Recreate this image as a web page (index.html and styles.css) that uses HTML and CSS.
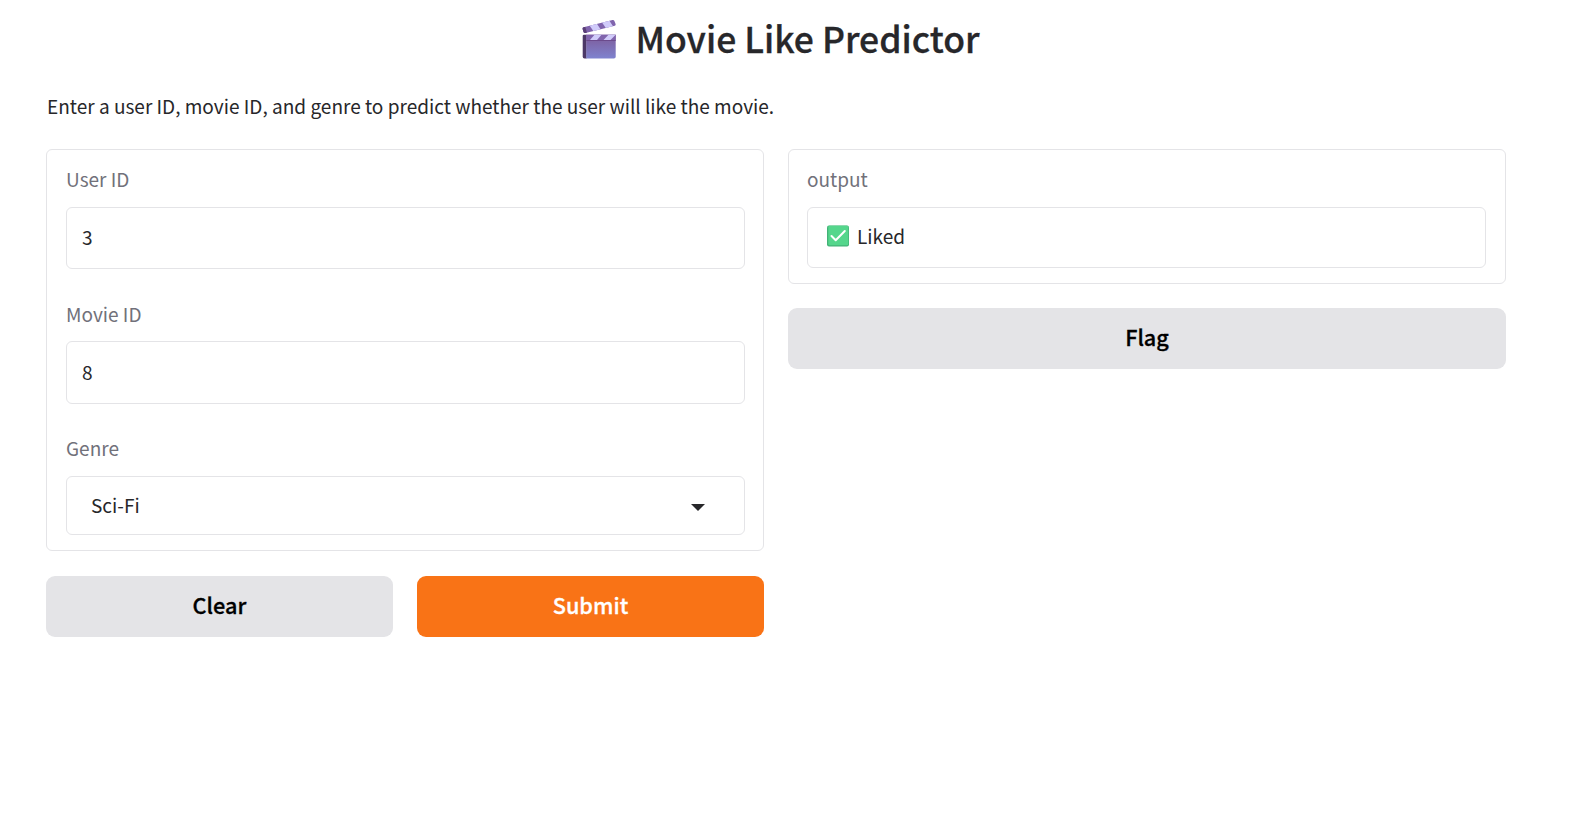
FILE: index.html
```html
<!DOCTYPE html>
<html lang="en">
<head>
<meta charset="utf-8">
<title>Movie Like Predictor</title>
<link rel="stylesheet" href="styles.css">
</head>
<body>
<main class="app">
  <h1 class="title">
    <svg class="clapper" viewBox="0 0 36 40" aria-hidden="true">
      <defs>
        <linearGradient id="board" x1="0" y1="0" x2="0" y2="1"><stop offset="0" stop-color="#7d5a98"/><stop offset="1" stop-color="#7f83cf"/></linearGradient>
        <clipPath id="arm"><path d="M1.500 7.300 30.500.1q1.400-.3 1.900 1l1.200 3q.3 1.200-.8 1.600L3.500 13q-1.500.4-2-1L.6 9q-.2-1.300.9-1.700z"/></clipPath>
      </defs>
      <g clip-path="url(#arm)">
        <path fill="#8064ad" d="M0-1h36v16H0z"/>
        <path fill="#d0cbfa" d="m6.500 4 7.300-2 5.200 8-7 2zM19 1l7-2.500L31.500 7l-7 2z"/>
        <path fill="#5a3f77" d="m0 7 3-1 2 7-5 1z"/>
      </g>
      <path fill="#4c3867" d="M.7 16q0-1.300 1.300-1.300h2.600v23.800H2.500Q.7 38.500.7 36.700z"/>
      <path fill="url(#board)" d="M4.300 14.700h29.400v22q0 1.800-1.800 1.800H4.300z"/>
      <path fill="#8064ad" d="M4.300 14.700h29.400V20H4.300z"/>
      <path fill="#d0cbfa" d="M12.500 14.700h7L15 20H8zM26.500 14.700h7.200L28.500 20h-7z"/>
      <path fill="#6b4a8c" d="M4.300 20h29.400v1H4.300z"/>
    </svg>
    <span class="title-text">Movie Like Predictor</span>
  </h1>
  <p class="intro">Enter a user ID, movie ID, and genre to predict whether the user will like the movie.</p>
  <div class="columns">
    <section class="column">
      <div class="panel inputs">
        <div class="field"><div class="label">User ID</div><div class="box number">3</div></div>
        <div class="field movie"><div class="label">Movie ID</div><div class="box number second">8</div></div>
        <div class="field"><div class="label">Genre</div>
          <div class="box select"><span>Sci-Fi</span><svg class="caret" viewBox="0 0 14 7" aria-hidden="true"><path fill="#27272a" d="M0 0h14L7 7z"/></svg></div>
        </div>
      </div>
      <div class="actions">
        <button class="button">Clear</button>
        <button class="button primary">Submit</button>
      </div>
    </section>
    <section class="column">
      <div class="panel output">
        <div class="label">output</div>
        <div class="box result">
          <svg class="check" viewBox="0 0 22 22" aria-hidden="true"><rect y=".5" width="22" height="21" rx="2" fill="#43b277"/><rect x="1.300" y=".7" width="20" height="19.600" rx="1.300" fill="#55d68c"/><path d="m4.500 11 4.200 4.200L17.800 6" fill="none" stroke="#fff" stroke-width="2" stroke-linecap="round" stroke-linejoin="round"/></svg>
          <span>Liked</span>
        </div>
      </div>
      <button class="button flag">Flag</button>
    </section>
  </div>
</main>
</body>
</html>
```
FILE: styles.css
```css
* { box-sizing: border-box; }
body {
  margin: 0;
  background: #fff;
  color: #27272a;
  font-family: "Noto Sans CJK SC", "Noto Sans", sans-serif;
  font-size: 19.040px;
  line-height: 30px;
}
.app { padding: 14px 67px 0 46px; }
.title {
  display: flex;
  justify-content: center;
  align-items: center;
  gap: 18px;
  height: 52px;
  margin: 0;
  padding-left: 9px;
  font-size: 35.500px;
  font-weight: 500;
  line-height: 48px;
  white-space: nowrap;
}
.title-text { padding-bottom: 4px; -webkit-text-stroke: .3px currentColor; }
.clapper { width: 36px; height: 40px; }
.intro { margin: 25px 0 28px; padding-left: 1px; }
.columns { display: grid; grid-template-columns: 718px 718px; gap: 24px; align-items: start; }
.column { display: flex; flex-direction: column; gap: 25px; }
.panel { border: 1px solid #e4e4e7; border-radius: 6px; }
.inputs { display: flex; flex-direction: column; gap: 29px; height: 402px; padding: 14px 18px 0 19px; }
.output { height: 135px; padding: 14px 19px 0 18px; }
.label { height: 43px; color: #71717a; }
.movie .label { padding-top: 1px; }
.box {
  display: flex;
  align-items: center;
  height: 62px;
  padding-bottom: 2px;
  border: 1px solid #e4e4e7;
  border-radius: 6px;
}
.number { padding-left: 15px; }
.second { height: 63px; }
.select { justify-content: space-between; height: 59px; padding: 0 39px 2px 24px; }
.caret { width: 14px; height: 7px; margin-top: 5px; }
.result { height: 61px; gap: 8px; padding: 0 0 3px 19px; }
.check { width: 22px; height: 22px; }
.actions { display: grid; grid-template-columns: 347px 347px; gap: 24px; }
.button {
  height: 61px;
  padding: 0 0 3px;
  border: 0;
  border-radius: 9px;
  background: #e4e4e7;
  color: #000;
  font-family: inherit;
  font-size: 21.700px;
  font-weight: 500;
  line-height: 30px;
  -webkit-text-stroke: .3px currentColor;
}
.primary { background: #f97316; color: #fff; }
.flag { margin-top: -1px; }
```
